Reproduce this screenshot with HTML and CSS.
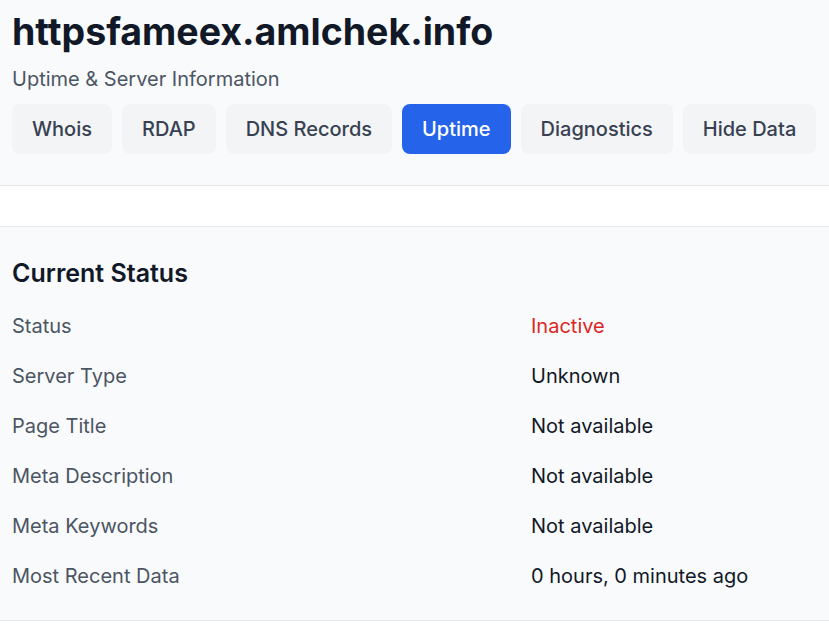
FILE: index.html
```html
<!DOCTYPE html>
<html lang="en">
<head>
    <meta charset="UTF-8">
    <title>httpsfameex.amlchek.info - Uptime</title>
    <link rel="stylesheet" href="styles.css">
</head>
<body>
    <header class="header">
        <h1 class="domain">httpsfameex.amlchek.info</h1>
        <p class="subtitle">Uptime &amp; Server Information</p>
        <nav class="tabs">
            <a href="#" class="tab">Whois</a>
            <a href="#" class="tab">RDAP</a>
            <a href="#" class="tab">DNS Records</a>
            <a href="#" class="tab active">Uptime</a>
            <a href="#" class="tab">Diagnostics</a>
            <a href="#" class="tab">Hide Data</a>
        </nav>
    </header>

    <div class="spacer"></div>

    <section class="status">
        <h2 class="status-title">Current Status</h2>
        <div class="rows">
            <div class="label">Status</div>
            <div class="value inactive">Inactive</div>
            <div class="label">Server Type</div>
            <div class="value">Unknown</div>
            <div class="label">Page Title</div>
            <div class="value">Not available</div>
            <div class="label">Meta Description</div>
            <div class="value">Not available</div>
            <div class="label">Meta Keywords</div>
            <div class="value">Not available</div>
            <div class="label">Most Recent Data</div>
            <div class="value">0 hours, 0 minutes ago</div>
        </div>
    </section>
</body>
</html>
```

FILE: styles.css
```css
body {
    margin: 0;
    background: #ffffff;
    font-family: 'Inter', 'Liberation Sans', sans-serif;
    color: #111827;
}

.header {
    background: #f9fafb;
    padding: 12px 12px 31px;
    border-bottom: 1px solid #e5e7eb;
}

.domain {
    margin: 0;
    font-size: 37.5px;
    line-height: 40px;
    font-weight: 700;
    color: #111827;
}

.subtitle {
    margin: 13px 0 0;
    font-size: 20px;
    line-height: 28px;
    color: #4b5563;
}

.tabs {
    display: flex;
    gap: 10px;
    margin-top: 11px;
}

.tab {
    display: block;
    padding: 10px 20px;
    font-size: 20px;
    line-height: 30px;
    font-weight: 500;
    color: #374151;
    background: #f3f4f6;
    border-radius: 8px;
    text-decoration: none;
}

.tab.active {
    background: #2563eb;
    color: #ffffff;
}

.spacer {
    height: 40px;
}

.status {
    background: #f9fafb;
    border-top: 1px solid #e5e7eb;
    border-bottom: 1px solid #e5e7eb;
    padding: 30px 12px 19px;
}

.status-title {
    margin: 0 0 12px;
    font-size: 25px;
    line-height: 32px;
    font-weight: 600;
    color: #111827;
}

.rows {
    display: grid;
    grid-template-columns: 519px 1fr;
}

.label,
.value {
    padding: 11px 0;
    font-size: 20px;
    line-height: 28px;
}

.label {
    color: #4b5563;
}

.value {
    color: #111827;
}

.value.inactive {
    color: #dc2626;
}
```
